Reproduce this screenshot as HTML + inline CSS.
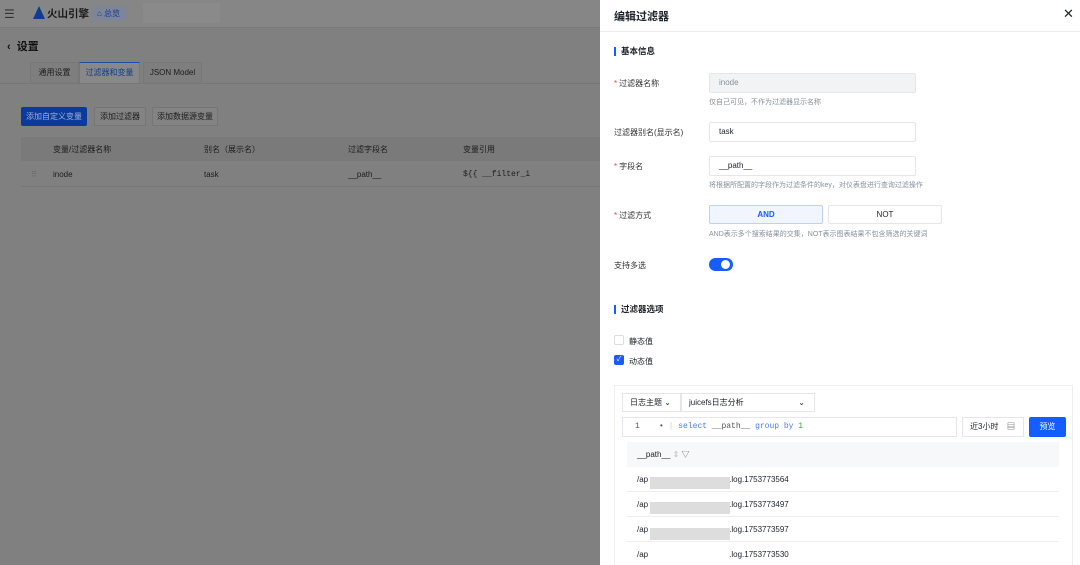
<!DOCTYPE html>
<html><head><meta charset="utf-8"><style>
*{box-sizing:border-box;margin:0;padding:0}
html,body{width:1080px;height:565px;overflow:hidden}
body{position:relative;font-family:"Liberation Sans","Noto Sans CJK SC",sans-serif;font-size:8px;color:#1d2129;background:#fff}
.abs{position:absolute}
#left{position:absolute;left:0;top:0;width:600px;height:565px;background:#808080;color:#1c1c1c}
.inp{position:absolute;left:709px;width:207px;height:20px;border:1px solid #e5e6eb;border-radius:2px;padding-left:9px;line-height:18px;font-size:8px}
.lab{position:absolute;left:614px;font-size:8px;color:#333}
.lab b{color:#f53f3f;font-weight:normal;margin-right:2px}
.hint{position:absolute;left:709px;font-size:7px;color:#86909c}
.sec{position:absolute;left:614px;font-size:8.5px;font-weight:bold;border-left:2px solid #165dff;padding-left:5px;line-height:9px}
.row{position:absolute;left:627px;width:432px;height:25px;border-bottom:1px solid #eee;font-size:8px;padding-left:10px;line-height:25px}
.blur{position:absolute;left:650px;width:80px;height:12px;background:#ddd}
.tab{position:absolute;top:62px;height:22px;border:1px solid #777;background:#7e7e7e;font-size:8px;line-height:20px;text-align:center}
</style></head><body>
<div id="left">
 <div class="abs" style="left:0;top:0;width:600px;height:28px;background:#868686;border-bottom:1px solid #7a7a7a"></div>
 <div class="abs" style="left:4px;top:7px;font-size:12px;color:#333">☰</div>
 <div class="abs" style="left:33px;top:6px;width:0;height:0;border-left:6px solid transparent;border-right:6px solid transparent;border-bottom:13px solid #0d3d8e"></div>
 <div class="abs" style="left:47px;top:6px;font-size:10.5px;font-weight:bold;color:#1a1a1a">火山引擎</div>
 <div class="abs" style="left:91px;top:6px;width:37px;height:15px;background:#7d8596;border-radius:2px;font-size:8px;color:#0e3a9a;line-height:15px;padding-left:6px">⌂ 总览</div>
 <div class="abs" style="left:143px;top:3px;width:77px;height:20px;background:#8a8a8a"></div>
 <div class="abs" style="left:7px;top:38px;font-size:11px;color:#111;font-weight:bold">‹ &nbsp;设置</div>
 <div class="abs" style="left:0;top:83px;width:600px;height:1px;background:#777"></div>
 <div class="tab" style="left:30px;width:49px">通用设置</div>
 <div class="tab" style="left:79px;width:61px;border-top:1px solid #1e4fa8;background:#888;color:#123e90">过滤器和变量</div>
 <div class="tab" style="left:143px;width:59px">JSON Model</div>
 <div class="abs" style="left:21px;top:107px;width:66px;height:19px;background:#0a3a9a;color:#9fb2d8;font-size:8px;line-height:19px;text-align:center;border-radius:2px">添加自定义变量</div>
 <div class="abs" style="left:94px;top:107px;width:52px;height:19px;border:1px solid #777;background:#838383;font-size:8px;line-height:17px;text-align:center">添加过滤器</div>
 <div class="abs" style="left:152px;top:107px;width:66px;height:19px;border:1px solid #777;background:#838383;font-size:8px;line-height:17px;text-align:center">添加数据源变量</div>
 <div class="abs" style="left:21px;top:137px;width:579px;height:24px;background:#7a7a7a"></div>
 <div class="abs" style="left:21px;top:186px;width:579px;height:1px;background:#777"></div>
 <div class="abs" style="top:144px;left:53px;font-size:8px">变量/过滤器名称</div>
 <div class="abs" style="top:144px;left:204px;font-size:8px">别名（展示名）</div>
 <div class="abs" style="top:144px;left:348px;font-size:8px">过滤字段名</div>
 <div class="abs" style="top:144px;left:463px;font-size:8px">变量引用</div>
 <div class="abs" style="top:170px;left:31px;font-size:8px;color:#666">⠿</div>
 <div class="abs" style="top:170px;left:53px;font-size:8px">inode</div>
 <div class="abs" style="top:170px;left:204px;font-size:8px">task</div>
 <div class="abs" style="top:170px;left:348px;font-size:8px">__path__</div>
 <div class="abs" style="top:170px;left:463px;font-size:8px;font-family:'Liberation Mono',monospace">${{ __filter_i</div>
</div>
<div class="abs" style="left:600px;top:0;width:480px;height:32px;border-bottom:1px solid #eee"></div>
<div class="abs" style="left:614px;top:8px;font-size:11px;font-weight:bold">编辑过滤器</div>
<div class="abs" style="left:1063px;top:6px;font-size:13px">✕</div>
<div class="sec" style="top:47px">基本信息</div>
<div class="lab" style="top:78px"><b>*</b>过滤器名称</div>
<div class="inp" style="top:73px;background:#f2f3f5;color:#86909c">inode</div>
<div class="hint" style="top:97px">仅自己可见，不作为过滤器显示名称</div>
<div class="lab" style="top:127px">过滤器别名(显示名)</div>
<div class="inp" style="top:122px">task</div>
<div class="lab" style="top:161px"><b>*</b>字段名</div>
<div class="inp" style="top:156px">__path__</div>
<div class="hint" style="top:180px">将根据所配置的字段作为过滤条件的key，对仪表盘进行查询过滤操作</div>
<div class="lab" style="top:210px"><b>*</b>过滤方式</div>
<div class="abs" style="left:709px;top:205px;width:114px;height:19px;border:1px solid #bed0fb;background:#f0f5ff;color:#165dff;font-weight:bold;font-size:8px;line-height:17px;text-align:center;border-radius:2px">AND</div>
<div class="abs" style="left:828px;top:205px;width:114px;height:19px;border:1px solid #e5e6eb;font-size:8px;line-height:17px;text-align:center;border-radius:2px">NOT</div>
<div class="hint" style="top:229px">AND表示多个搜索结果的交集，NOT表示图表结果不包含筛选的关键词</div>
<div class="lab" style="top:260px">支持多选</div>
<div class="abs" style="left:709px;top:258px;width:24px;height:13px;border-radius:7px;background:#165dff"><div class="abs" style="left:12px;top:2px;width:9px;height:9px;border-radius:50%;background:#fff"></div></div>
<div class="sec" style="top:305px">过滤器选项</div>
<div class="abs" style="left:614px;top:335px;width:10px;height:10px;border:1px solid #ddd;border-radius:2px"></div>
<div class="abs" style="left:629px;top:336px;font-size:8px">静态值</div>
<div class="abs" style="left:614px;top:355px;width:10px;height:10px;background:#165dff;border-radius:2px;color:#fff;font-size:7px;line-height:10px;text-align:center">✓</div>
<div class="abs" style="left:629px;top:356px;font-size:8px">动态值</div>
<div class="abs" style="left:614px;top:385px;width:459px;height:180px;border:1px solid #eee;border-bottom:none"></div>
<div class="abs" style="left:622px;top:393px;width:59px;height:19px;border:1px solid #e5e6eb;font-size:8px;line-height:17px;padding-left:7px">日志主题 ⌄</div>
<div class="abs" style="left:681px;top:393px;width:134px;height:19px;border:1px solid #e5e6eb;font-size:8px;line-height:17px;padding-left:7px">juicefs日志分析<span style="position:absolute;right:9px">⌄</span></div>
<div class="abs" style="left:622px;top:417px;width:335px;height:20px;border:1px solid #e5e6eb;font-size:8px;line-height:18px;padding-left:12px;font-family:'Liberation Mono',monospace;color:#555">1 &nbsp;&nbsp;&nbsp;• <span style="color:#ccc">|</span> <span style="color:#4a7bf0">select</span> __path__ <span style="color:#4a7bf0">group by</span> <span style="color:#3a3">1</span></div>
<div class="abs" style="left:962px;top:417px;width:62px;height:20px;border:1px solid #e5e6eb;font-size:8px;line-height:18px;padding-left:7px">近3小时<span style="position:absolute;right:8px">▤</span></div>
<div class="abs" style="left:1029px;top:417px;width:37px;height:20px;background:#165dff;border-radius:2px;color:#fff;font-size:8px;line-height:20px;text-align:center">预览</div>
<div class="abs" style="left:627px;top:442px;width:432px;height:25px;background:#f7f8fa;font-size:8px;line-height:25px;padding-left:10px">__path__ <span style="color:#bbb">⇕</span> <span style="color:#666">▽</span></div>
<div class="row" style="top:467px">/ap<span style="margin-left:81px">.log.1753773564</span></div>
<div class="row" style="top:492px">/ap<span style="margin-left:81px">.log.1753773497</span></div>
<div class="row" style="top:517px">/ap<span style="margin-left:81px">.log.1753773597</span></div>
<div class="row" style="top:542px">/ap<span style="margin-left:81px">.log.1753773530</span></div>
<div class="blur" style="top:477px"></div><div class="blur" style="top:502px"></div><div class="blur" style="top:528px"></div>
</body></html>
